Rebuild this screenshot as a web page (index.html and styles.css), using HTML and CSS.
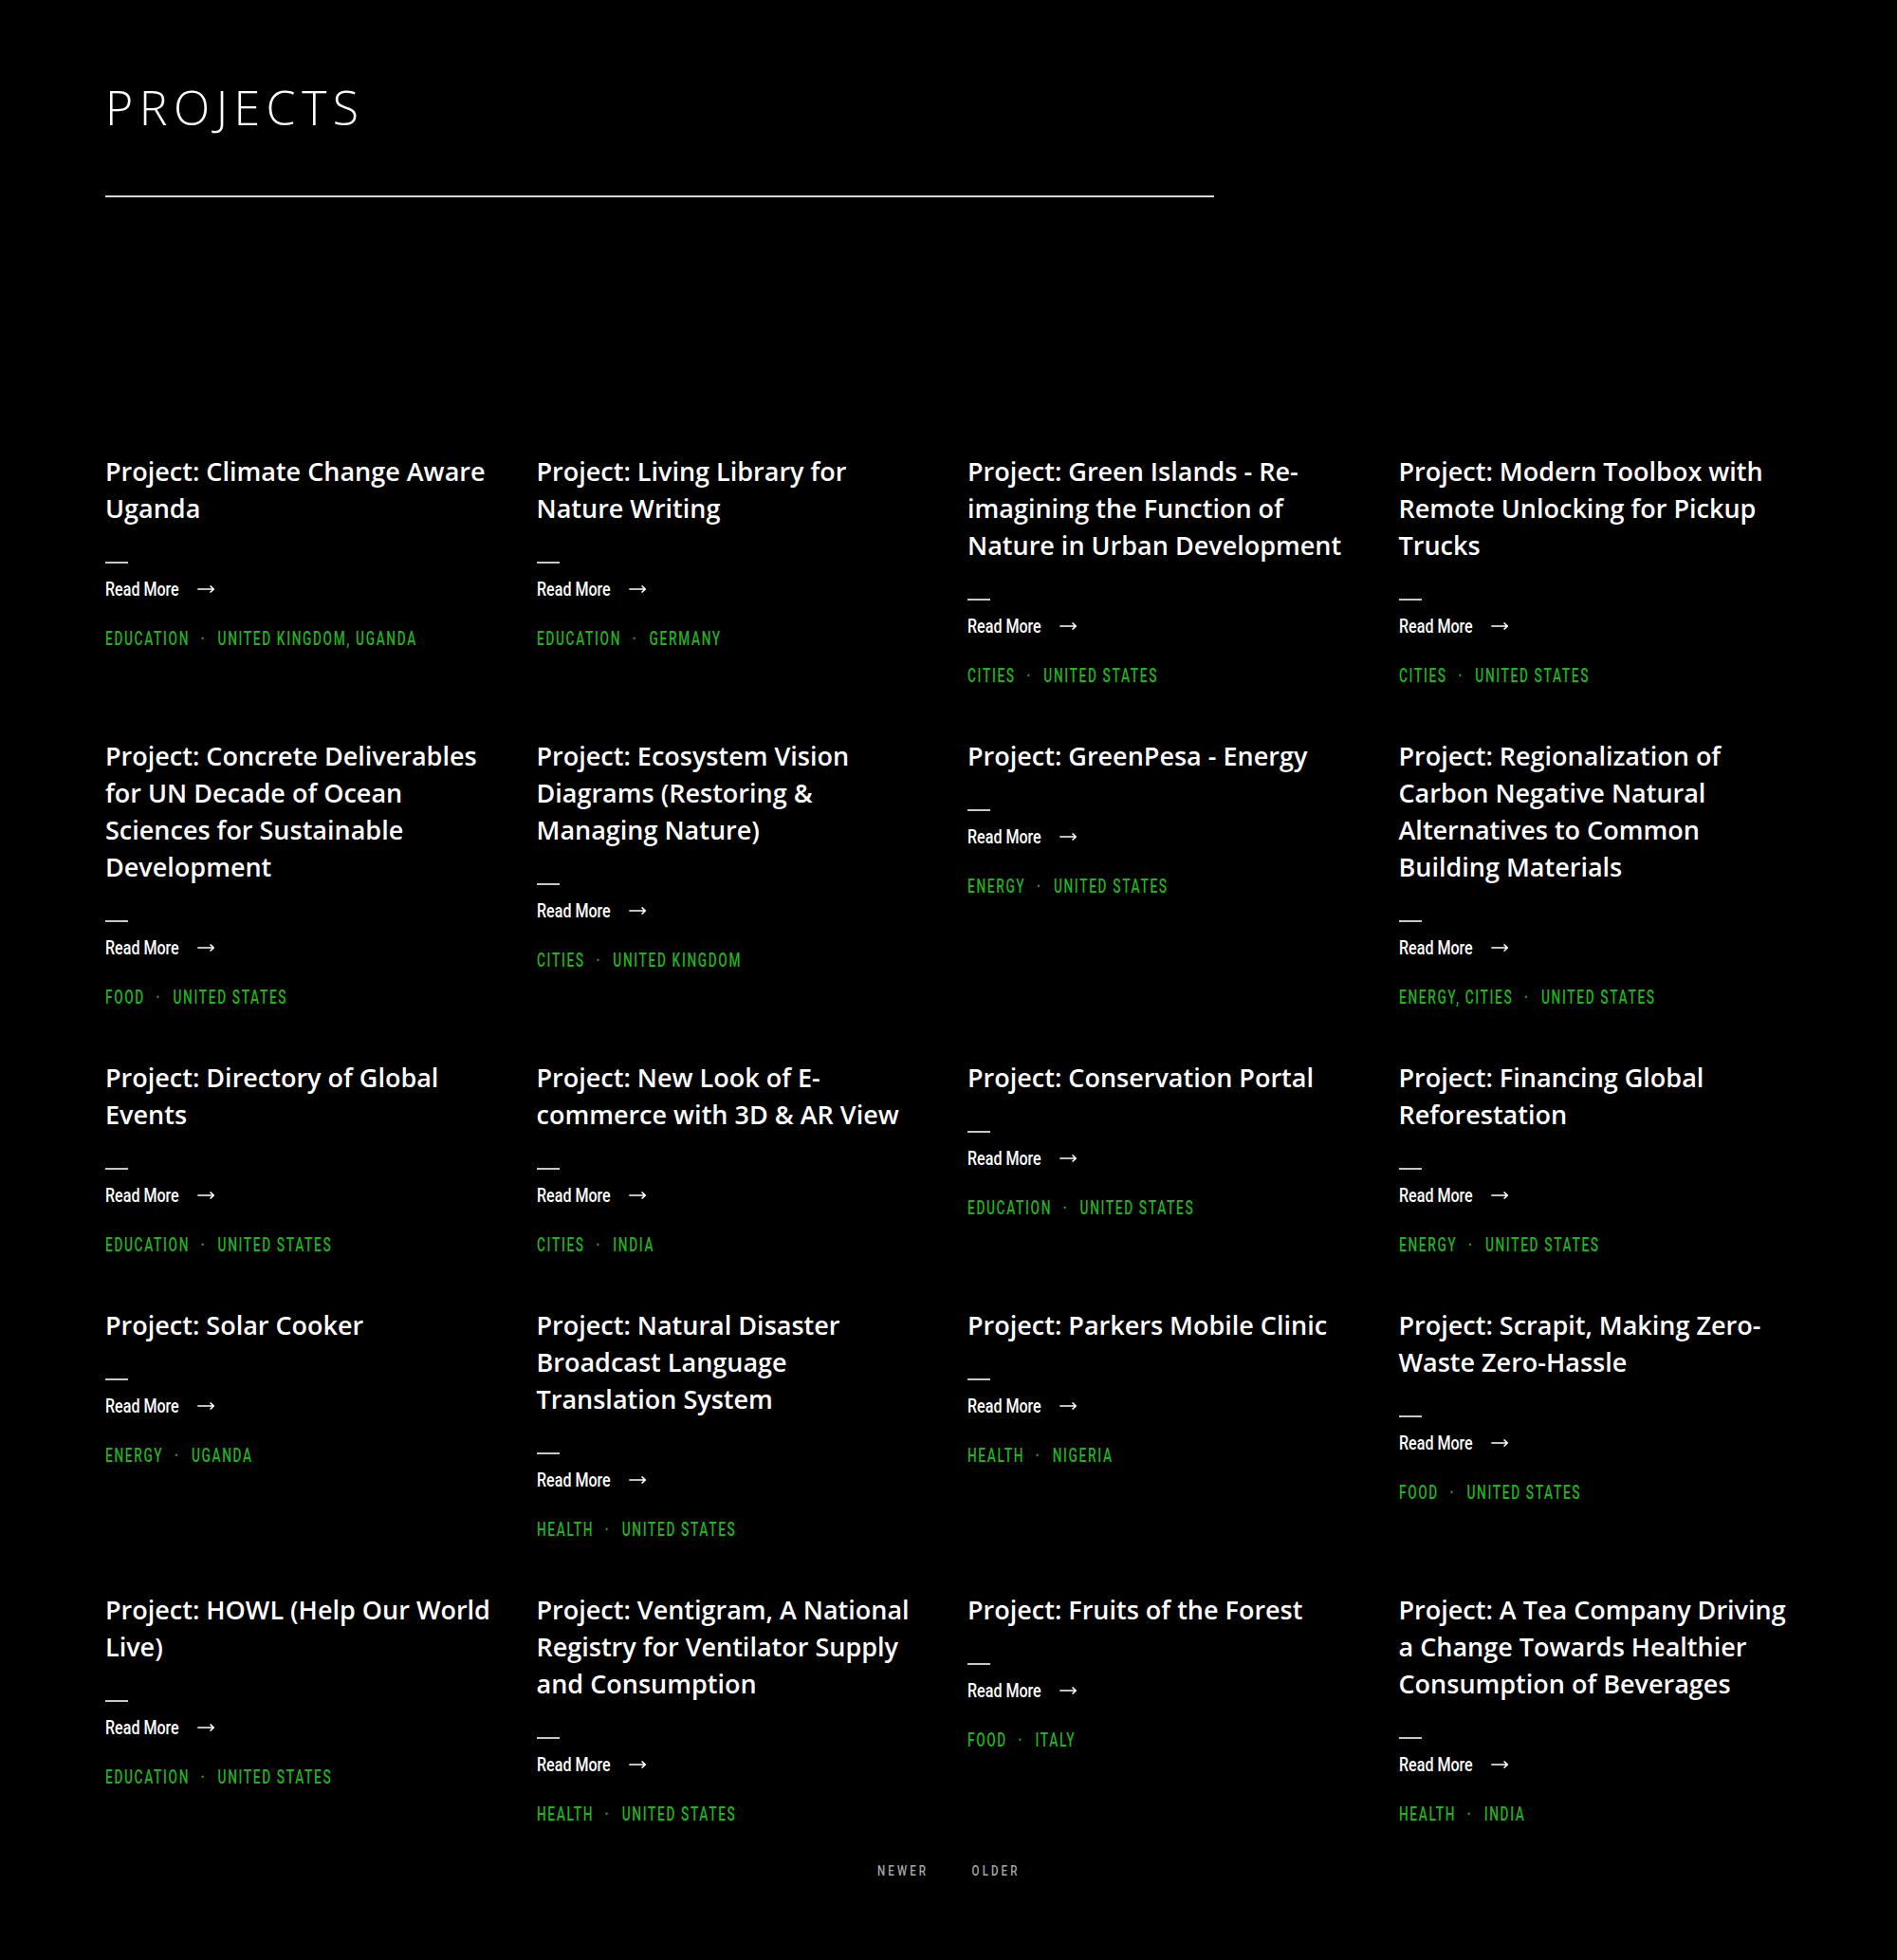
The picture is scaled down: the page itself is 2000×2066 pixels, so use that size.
FILE: index.html
```html
<!DOCTYPE html>
<html lang="en">
<head>
  <meta charset="UTF-8" />
  <meta name="viewport" content="width=device-width, initial-scale=1" />
  <title>Projects</title>
  <link rel="stylesheet" href="styles.css">
</head>
<body>

  <!-- page heading -->
  <header class="page-head">
    <h1>PROJECTS</h1>
    <div class="head-rule"></div>
  </header>

  <!-- project list -->
  <main class="project-grid">

    <article class="card">
      <h3>Project: Climate Change Aware Uganda</h3>
      <div class="dash"></div>
      <a class="read-more" href="#">Read More <svg width="24" height="10" viewBox="0 0 24 10"><path d="M0 5H22.5M17.5 1.5L22.5 5L17.5 8.5" /></svg></a>
      <div class="tags"><span>Education</span><span class="sep">·</span><span>United Kingdom, Uganda</span></div>
    </article>

    <article class="card">
      <h3>Project: Living Library for Nature Writing</h3>
      <div class="dash"></div>
      <a class="read-more" href="#">Read More <svg width="24" height="10" viewBox="0 0 24 10"><path d="M0 5H22.5M17.5 1.5L22.5 5L17.5 8.5" /></svg></a>
      <div class="tags"><span>Education</span><span class="sep">·</span><span>Germany</span></div>
    </article>

    <article class="card">
      <h3>Project: Green Islands - Re-imagining the Function of Nature in Urban Development</h3>
      <div class="dash"></div>
      <a class="read-more" href="#">Read More <svg width="24" height="10" viewBox="0 0 24 10"><path d="M0 5H22.5M17.5 1.5L22.5 5L17.5 8.5" /></svg></a>
      <div class="tags"><span>Cities</span><span class="sep">·</span><span>United States</span></div>
    </article>

    <article class="card">
      <h3>Project: Modern Toolbox with Remote Unlocking for Pickup Trucks</h3>
      <div class="dash"></div>
      <a class="read-more" href="#">Read More <svg width="24" height="10" viewBox="0 0 24 10"><path d="M0 5H22.5M17.5 1.5L22.5 5L17.5 8.5" /></svg></a>
      <div class="tags"><span>Cities</span><span class="sep">·</span><span>United States</span></div>
    </article>

    <article class="card">
      <h3>Project: Concrete Deliverables for UN Decade of Ocean Sciences for Sustainable Development</h3>
      <div class="dash"></div>
      <a class="read-more" href="#">Read More <svg width="24" height="10" viewBox="0 0 24 10"><path d="M0 5H22.5M17.5 1.5L22.5 5L17.5 8.5" /></svg></a>
      <div class="tags"><span>Food</span><span class="sep">·</span><span>United States</span></div>
    </article>

    <article class="card">
      <h3>Project: Ecosystem Vision Diagrams (Restoring &amp; Managing Nature)</h3>
      <div class="dash"></div>
      <a class="read-more" href="#">Read More <svg width="24" height="10" viewBox="0 0 24 10"><path d="M0 5H22.5M17.5 1.5L22.5 5L17.5 8.5" /></svg></a>
      <div class="tags"><span>Cities</span><span class="sep">·</span><span>United Kingdom</span></div>
    </article>

    <article class="card">
      <h3>Project: GreenPesa - Energy</h3>
      <div class="dash"></div>
      <a class="read-more" href="#">Read More <svg width="24" height="10" viewBox="0 0 24 10"><path d="M0 5H22.5M17.5 1.5L22.5 5L17.5 8.5" /></svg></a>
      <div class="tags"><span>Energy</span><span class="sep">·</span><span>United States</span></div>
    </article>

    <article class="card">
      <h3>Project: Regionalization of Carbon Negative Natural Alternatives to Common Building Materials</h3>
      <div class="dash"></div>
      <a class="read-more" href="#">Read More <svg width="24" height="10" viewBox="0 0 24 10"><path d="M0 5H22.5M17.5 1.5L22.5 5L17.5 8.5" /></svg></a>
      <div class="tags"><span>Energy, Cities</span><span class="sep">·</span><span>United States</span></div>
    </article>

    <article class="card">
      <h3>Project: Directory of Global Events</h3>
      <div class="dash"></div>
      <a class="read-more" href="#">Read More <svg width="24" height="10" viewBox="0 0 24 10"><path d="M0 5H22.5M17.5 1.5L22.5 5L17.5 8.5" /></svg></a>
      <div class="tags"><span>Education</span><span class="sep">·</span><span>United States</span></div>
    </article>

    <article class="card">
      <h3>Project: New Look of E-commerce with 3D &amp; AR View</h3>
      <div class="dash"></div>
      <a class="read-more" href="#">Read More <svg width="24" height="10" viewBox="0 0 24 10"><path d="M0 5H22.5M17.5 1.5L22.5 5L17.5 8.5" /></svg></a>
      <div class="tags"><span>Cities</span><span class="sep">·</span><span>India</span></div>
    </article>

    <article class="card">
      <h3>Project: Conservation Portal</h3>
      <div class="dash"></div>
      <a class="read-more" href="#">Read More <svg width="24" height="10" viewBox="0 0 24 10"><path d="M0 5H22.5M17.5 1.5L22.5 5L17.5 8.5" /></svg></a>
      <div class="tags"><span>Education</span><span class="sep">·</span><span>United States</span></div>
    </article>

    <article class="card">
      <h3>Project: Financing Global Reforestation</h3>
      <div class="dash"></div>
      <a class="read-more" href="#">Read More <svg width="24" height="10" viewBox="0 0 24 10"><path d="M0 5H22.5M17.5 1.5L22.5 5L17.5 8.5" /></svg></a>
      <div class="tags"><span>Energy</span><span class="sep">·</span><span>United States</span></div>
    </article>

    <article class="card">
      <h3>Project: Solar Cooker</h3>
      <div class="dash"></div>
      <a class="read-more" href="#">Read More <svg width="24" height="10" viewBox="0 0 24 10"><path d="M0 5H22.5M17.5 1.5L22.5 5L17.5 8.5" /></svg></a>
      <div class="tags"><span>Energy</span><span class="sep">·</span><span>Uganda</span></div>
    </article>

    <article class="card">
      <h3>Project: Natural Disaster Broadcast Language Translation System</h3>
      <div class="dash"></div>
      <a class="read-more" href="#">Read More <svg width="24" height="10" viewBox="0 0 24 10"><path d="M0 5H22.5M17.5 1.5L22.5 5L17.5 8.5" /></svg></a>
      <div class="tags"><span>Health</span><span class="sep">·</span><span>United States</span></div>
    </article>

    <article class="card">
      <h3>Project: Parkers Mobile Clinic</h3>
      <div class="dash"></div>
      <a class="read-more" href="#">Read More <svg width="24" height="10" viewBox="0 0 24 10"><path d="M0 5H22.5M17.5 1.5L22.5 5L17.5 8.5" /></svg></a>
      <div class="tags"><span>Health</span><span class="sep">·</span><span>Nigeria</span></div>
    </article>

    <article class="card">
      <h3>Project: Scrapit, Making Zero-Waste Zero-Hassle</h3>
      <div class="dash"></div>
      <a class="read-more" href="#">Read More <svg width="24" height="10" viewBox="0 0 24 10"><path d="M0 5H22.5M17.5 1.5L22.5 5L17.5 8.5" /></svg></a>
      <div class="tags"><span>Food</span><span class="sep">·</span><span>United States</span></div>
    </article>

    <article class="card">
      <h3>Project: HOWL (Help Our World Live)</h3>
      <div class="dash"></div>
      <a class="read-more" href="#">Read More <svg width="24" height="10" viewBox="0 0 24 10"><path d="M0 5H22.5M17.5 1.5L22.5 5L17.5 8.5" /></svg></a>
      <div class="tags"><span>Education</span><span class="sep">·</span><span>United States</span></div>
    </article>

    <article class="card">
      <h3>Project: Ventigram, A National Registry for Ventilator Supply and Consumption</h3>
      <div class="dash"></div>
      <a class="read-more" href="#">Read More <svg width="24" height="10" viewBox="0 0 24 10"><path d="M0 5H22.5M17.5 1.5L22.5 5L17.5 8.5" /></svg></a>
      <div class="tags"><span>Health</span><span class="sep">·</span><span>United States</span></div>
    </article>

    <article class="card">
      <h3>Project: Fruits of the Forest</h3>
      <div class="dash"></div>
      <a class="read-more" href="#">Read More <svg width="24" height="10" viewBox="0 0 24 10"><path d="M0 5H22.5M17.5 1.5L22.5 5L17.5 8.5" /></svg></a>
      <div class="tags"><span>Food</span><span class="sep">·</span><span>Italy</span></div>
    </article>

    <article class="card">
      <h3>Project: A Tea Company Driving a Change Towards Healthier Consumption of Beverages</h3>
      <div class="dash"></div>
      <a class="read-more" href="#">Read More <svg width="24" height="10" viewBox="0 0 24 10"><path d="M0 5H22.5M17.5 1.5L22.5 5L17.5 8.5" /></svg></a>
      <div class="tags"><span>Health</span><span class="sep">·</span><span>India</span></div>
    </article>

  </main>

  <nav class="pager">
    <a href="#">Newer</a>
    <a href="#">Older</a>
  </nav>

</body>
</html>
```

FILE: styles.css
```css
body { margin: 0; background: #000; color: #fff; font-family: "Open Sans", sans-serif; }
a { color: inherit; text-decoration: none; }

.page-head { padding: 83px 111px 0; }
.page-head h1 {
  margin: 0; font-size: 50px; line-height: 60px;
  font-weight: 300; letter-spacing: 6.5px;
}
.head-rule { width: 1169px; height: 2px; background: #d9d9d9; margin-top: 63px; }

.project-grid {
  display: grid; grid-template-columns: repeat(4, minmax(0, 1fr));
  column-gap: 40px; row-gap: 55px; align-items: start;
  padding: 0 111px; margin-top: 269px;
}
.card { min-width: 0; }
.card h3 {
  margin: 0; font-size: 27px; line-height: 39px;
  font-weight: 600; color: #fff;
}
.dash { width: 24px; height: 2px; background: #c8c8c8; margin-top: 37px; }

/* no condensed face installed, so the label lines are squeezed */
.read-more, .tags, .pager a { font-family: Roboto, sans-serif; white-space: nowrap; }
.read-more {
  display: flex; align-items: center; gap: 25px;
  margin-top: 15px; line-height: 24px;
  font-size: 21px; font-weight: 500;
  transform: scaleX(.765); transform-origin: left center;
}
.read-more svg { fill: none; stroke: #fff; stroke-width: 1.6; }
.tags {
  margin-top: 30px; line-height: 20px;
  font-size: 20px; font-weight: 500; letter-spacing: 2.4px;
  text-transform: uppercase; color: #21b21f;
  transform: scaleX(.685); transform-origin: left center;
}
.tags .sep { margin: 0 18px 0 17px; }

.pager {
  display: flex; justify-content: center; gap: 30px;
  margin-top: 41px; padding-bottom: 80px;
}
.pager a {
  display: inline-block; font-size: 15px; font-weight: 500; letter-spacing: 4px;
  text-transform: uppercase; color: #a4a8ab;
  transform: scaleX(.77);
}
```
